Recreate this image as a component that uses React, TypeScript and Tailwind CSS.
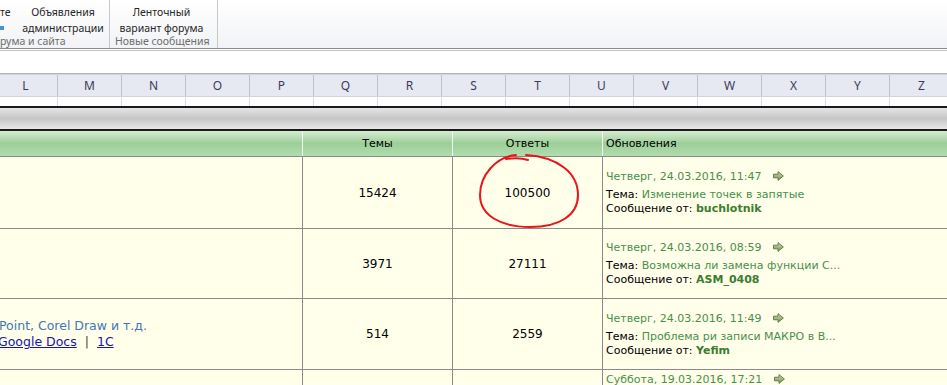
import React from 'react';

const COLS = ['L', 'M', 'N', 'O', 'P', 'Q', 'R', 'S', 'T', 'U', 'V', 'W', 'X', 'Y', 'Z'];

/* small green "go to last post" arrow */
function GoArrow() {
  return (
    <svg width="11" height="10" viewBox="0 0 11 10" className="inline-block ml-[12px] align-[-1px]">
      <defs>
        <linearGradient id="ga" x1="0" y1="0" x2="0" y2="1">
          <stop offset="0" stopColor="#c9d9a6" />
          <stop offset="1" stopColor="#7c9a4e" />
        </linearGradient>
      </defs>
      <path d="M0.5 3.2H5V0.6L10.4 5L5 9.4V6.8H0.5Z" fill="url(#ga)" stroke="#5f6f50" strokeWidth="0.9" />
    </svg>
  );
}

type Update = { date: string; topic: string; user: string };

function UpdateCell({ u, pt }: { u: Update; pt: string }) {
  return (
    <div className={`pl-[3px] ${pt} text-[11px] leading-[14px] whitespace-nowrap overflow-hidden`}>
      <div className="text-[#46904a] mb-[4px]">
        {u.date}
        <GoArrow />
      </div>
      <div className="text-black">
        Тема: <span className="text-[#46904a]">{u.topic}</span>
      </div>
      <div className="text-black">
        Сообщение от: <b className="text-[#3b7d2f]">{u.user}</b>
      </div>
    </div>
  );
}

const rows = [
  { h: 'h-[72px]', topics: '15424', answers: '100500', pt: 'pt-[13px]', u: { date: 'Четверг, 24.03.2016, 11:47', topic: 'Изменение точек в запятые', user: 'buchlotnik' } },
  { h: 'h-[70px]', topics: '3971', answers: '27111', pt: 'pt-[12px]', u: { date: 'Четверг, 24.03.2016, 08:59', topic: 'Возможна ли замена функции С...', user: 'ASM_0408' } },
  { h: 'h-[71px]', topics: '514', answers: '2559', pt: 'pt-[13px]', u: { date: 'Четверг, 24.03.2016, 11:49', topic: 'Пpoблема ри записи МАКРО в В...', user: 'Yefim' } },
];

const cell = 'bg-[#ffffea] border-t border-[#8a8a8a]';

export default function App() {
  return (
    <div className="w-[947px] h-[385px] overflow-hidden bg-white relative" style={{ fontFamily: '"DejaVu Sans", Verdana, sans-serif' }}>
      {/* Ribbon */}
      <div className="h-[49px] bg-gradient-to-b from-white to-[#f2f3f6] border-b border-[#8a8a8a] flex text-[10.5px] leading-[16px]" style={{ fontFamily: '"Noto Sans", "Open Sans", sans-serif' }}>
        <div className="w-[110px] border-r border-[#c8c8cc] relative flex flex-col">
          <div className="flex pt-[4px] h-[35px]">
            <div className="text-[#262626] w-[22px]">те</div>
            <div className="text-[#262626] text-center w-[82px]">
              Объявления<br />администрации
            </div>
          </div>
          <div className="text-[#6d6d6d] leading-[12px]">рума и сайта</div>
          <div className="absolute left-0 top-[26px] w-[4px] h-[4px] bg-[#4a8fd0]" />
        </div>
        <div className="w-[108px] border-r border-[#c8c8cc] flex flex-col">
          <div className="text-[#262626] text-center pt-[4px] h-[35px] pl-[2px] pr-[6px]">
            Ленточный<br />вариант форума
          </div>
          <div className="text-[#6d6d6d] leading-[12px] pl-[5px] whitespace-nowrap">Новые сообщения</div>
        </div>
        <div className="flex-1" />
      </div>
      <div className="h-[1px] bg-white" />
      <div className="h-[1px] bg-[#c4c4c4]" />

      {/* Formula bar area */}
      <div className="h-[23px] bg-white border-b border-[#b4b4b4]" />

      {/* Column headers */}
      <div className="h-[23px] flex bg-[#e6e8f2] border-t border-[#d2d4dc] border-b border-[#b6b9cc] -ml-[6px] text-[12px] text-[#3b3b58]" style={{ fontFamily: '"Noto Sans", "Open Sans", sans-serif' }}>
        {COLS.map((c) => (
          <div key={c} className="w-[64px] shrink-0 border-r border-[#bcc0d2] flex items-center justify-center">
            {c}
          </div>
        ))}
      </div>
      <div className="h-[9px] flex -ml-[6px]">
        {COLS.map((c) => (
          <div key={c} className="w-[64px] shrink-0 border-r border-[#d4dae6]" />
        ))}
      </div>

      {/* frozen band */}
      <div className="h-[2px] bg-[#1a1a1a]" />
      <div className="h-[21px] bg-gradient-to-b from-[#e4e4e4] via-[#c6c6c6] to-[#e8e8e8]" />
      <div className="h-[2px] bg-[#1a1a1a]" />

      {/* Forum table */}
      <div className="grid grid-cols-[303px_150px_150px_1fr] relative">
        {/* header */}
        <div className="h-[25px] bg-gradient-to-b from-[#d4ecd0] via-[#9ccf98] to-[#b2dcae] border-r border-[#f4f4f4]" />
        <div className="h-[25px] bg-gradient-to-b from-[#d4ecd0] via-[#9ccf98] to-[#b2dcae] border-r border-[#f4f4f4] flex items-end justify-center pb-[4px] text-[11px] text-black">Темы</div>
        <div className="h-[25px] bg-gradient-to-b from-[#d4ecd0] via-[#9ccf98] to-[#b2dcae] border-r border-[#f4f4f4] flex items-end justify-center pb-[4px] text-[11px] text-black">Ответы</div>
        <div className="h-[25px] bg-gradient-to-b from-[#d4ecd0] via-[#9ccf98] to-[#b2dcae] flex items-end pl-[3px] pb-[4px] text-[11px] text-black">Обновления</div>

        {rows.map((r, i) => (
          <React.Fragment key={i}>
            <div className={`${r.h} ${cell} border-r flex flex-col justify-center text-[12.5px] leading-[16px] overflow-hidden`}>
              {i === 2 && (
                <>
                  <div className="text-[#3f78b4] -ml-[1px] whitespace-nowrap">Point, Corel Draw и т.д.</div>
                  <div className="-ml-[2px] whitespace-nowrap">
                    <span className="text-[#1414b4] underline">Google Docs</span>
                    <span className="text-[#444] mx-[8px]">|</span>
                    <span className="text-[#1414b4] underline">1C</span>
                  </div>
                </>
              )}
            </div>
            <div className={`${r.h} ${cell} border-r flex items-center justify-center text-[12px] text-black`}>{r.topics}</div>
            <div className={`${r.h} ${cell} border-r flex items-center justify-center text-[12px] text-black`}>{r.answers}</div>
            <div className={`${r.h} ${cell}`}>
              <UpdateCell u={r.u} pt={r.pt} />
            </div>
          </React.Fragment>
        ))}

        {/* last, cut row */}
        <div className={`h-[30px] ${cell} border-r`} />
        <div className={`h-[30px] ${cell} border-r`} />
        <div className={`h-[30px] ${cell} border-r`} />
        <div className={`h-[30px] ${cell} pl-[3px] pt-[3px] text-[11px] leading-[14px] text-[#46904a] whitespace-nowrap`}>
          Суббота, 19.03.2016, 17:21
          <GoArrow />
        </div>

        {/* red hand-drawn circle over 100500 */}
        <svg className="absolute left-[470px] top-[20px] pointer-events-none" width="120" height="82" viewBox="0 0 120 82" fill="none">
          <path
            d="M36 8 C44 7 52 7 58 9 M46 4 C26 6 10 24 10 44 C10 64 30 76 60 76 C90 76 108 64 108 44 C108 22 88 6 56 4"
            stroke="#e8151c"
            strokeWidth="2"
            strokeLinecap="round"
          />
        </svg>
      </div>
    </div>
  );
}
